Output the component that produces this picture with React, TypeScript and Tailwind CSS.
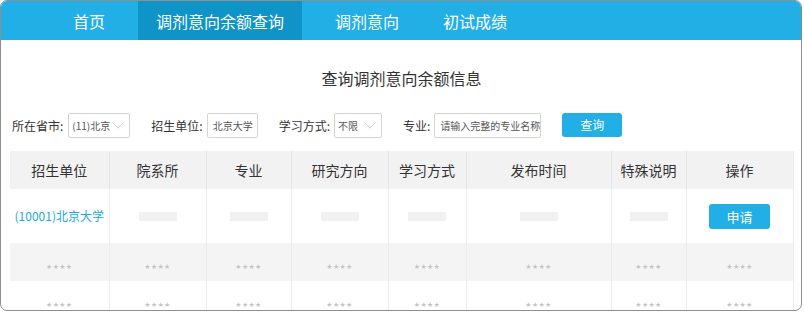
import React from 'react';

const FONT = { fontFamily: '"Noto Sans CJK SC", "Noto Sans", "Liberation Sans", sans-serif' };

const TABS = [
  { label: '首页', cls: 'w-[137px] pl-[72px]' },
  { label: '调剂意向余额查询', cls: 'w-[164px] justify-center bg-[#0f94c8]' },
  { label: '调剂意向', cls: 'w-[130px] justify-center' },
  { label: '初试成绩', cls: 'w-[86px] justify-center' },
];

const COLS = [
  { title: '招生单位', w: 'w-[99px]' },
  { title: '院系所', w: 'w-[97px]' },
  { title: '专业', w: 'w-[85px]' },
  { title: '研究方向', w: 'w-[97px]' },
  { title: '学习方式', w: 'w-[78px]' },
  { title: '发布时间', w: 'w-[145px]' },
  { title: '特殊说明', w: 'w-[75px]' },
  { title: '操作', w: 'w-[107px]' },
];

function Chevron() {
  return (
    <svg width="12" height="7" viewBox="0 0 12 7" className="shrink-0">
      <path d="M0.5 0.5 L6 6.2 L11.5 0.5" fill="none" stroke="#cccccc" strokeWidth="1" />
    </svg>
  );
}

function SelectBox({ value, width }: { value: string; width: string }) {
  return (
    <div className={`${width} h-[25px] border border-[#d4d4d4] rounded-[2px] flex items-center justify-between pl-[3px] pr-[5px] text-[10px] text-[#555]`}>
      <span>{value}</span>
      <Chevron />
    </div>
  );
}

function TextBox({ value, width }: { value: string; width: string }) {
  return (
    <div className={`${width} h-[25px] border border-[#d4d4d4] rounded-[2px] flex items-center px-[5px] text-[10px] text-[#555] whitespace-nowrap overflow-hidden`}>
      {value}
    </div>
  );
}

function Stars() {
  return (
    <span className="text-[7px] text-[#c4c4c4] tracking-[0.3px] font-['DejaVu_Sans',sans-serif]">
      ★★★★
    </span>
  );
}

function Bar() {
  return <div className="mx-auto w-[38px] h-[9px] bg-[#f1f1f1]" />;
}

export default function App() {
  return (
    <div style={FONT} className="w-[803px] h-[312px] bg-white">
      <div className="w-[802px] h-[311px] border border-[#8e8e8e] rounded-[7px] overflow-hidden flex flex-col">
        {/* Nav */}
        <div className="h-[39px] shrink-0 bg-[#21afe6] flex text-white text-[16px]">
          {TABS.map((t) => (
            <div key={t.label} className={`${t.cls} flex items-center h-full`}>
              {t.label}
            </div>
          ))}
        </div>

        <div className="pl-[9px] pr-[8px]">
          <h2 className="mt-[26px] h-[24px] leading-[24px] text-center text-[16px] text-[#333]">查询调剂意向余额信息</h2>

          {/* Filters */}
          <div className="mt-[23px] flex items-center text-[12px] text-[#333] pl-[2px]">
            <span>所在省市:</span>
            <div className="ml-[5px]"><SelectBox value="(11)北京" width="w-[62px]" /></div>
            <span className="ml-[21px]">招生单位:</span>
            <div className="ml-[4px]"><TextBox value="北京大学" width="w-[51px]" /></div>
            <span className="ml-[21px]">学习方式:</span>
            <div className="ml-[4px]"><SelectBox value="不限" width="w-[48px]" /></div>
            <span className="ml-[21px]">专业:</span>
            <div className="ml-[4px]"><TextBox value="请输入完整的专业名称" width="w-[107px]" /></div>
            <button className="ml-[21px] w-[60px] h-[24px] -mt-[2px] rounded-[3px] bg-[#21afe6] text-white text-[12px]">查询</button>
          </div>

          {/* Table */}
          <table className="mt-[13px] w-[783px] table-fixed border-collapse border-r border-[#ececec]">
            <colgroup>
              {COLS.map((c) => (
                <col key={c.title} className={c.w} />
              ))}
            </colgroup>
            <thead>
              <tr className="h-[38px] bg-[#f2f2f2]">
                {COLS.map((c, i) => (
                  <th key={c.title} className={`font-normal text-[14px] text-[#333] ${i > 0 ? 'border-l border-[#e4e4e4]' : ''}`}>
                    {c.title}
                  </th>
                ))}
              </tr>
            </thead>
            <tbody>
              <tr className="h-[54px] bg-white">
                <td className="text-center text-[12px] text-[#1ea8e0]">(10001)北京大学</td>
                {[0, 1, 2, 3, 4, 5].map((i) => (
                  <td key={i} className="border-l border-[#ececec]"><Bar /></td>
                ))}
                <td className="border-l border-[#ececec] text-center">
                  <button className="w-[61px] h-[25px] rounded-[3px] bg-[#21afe6] text-white text-[13px]">申请</button>
                </td>
              </tr>
              {['bg-[#f4f4f4]', 'bg-white'].map((bg, r) => (
                <tr key={r} className={`h-[38px] ${bg}`}>
                  {COLS.map((c, i) => (
                    <td key={c.title} className={`text-center ${i > 0 ? 'border-l border-[#ececec]' : ''}`}>
                      <Stars />
                    </td>
                  ))}
                </tr>
              ))}
            </tbody>
          </table>
        </div>
      </div>
    </div>
  );
}
